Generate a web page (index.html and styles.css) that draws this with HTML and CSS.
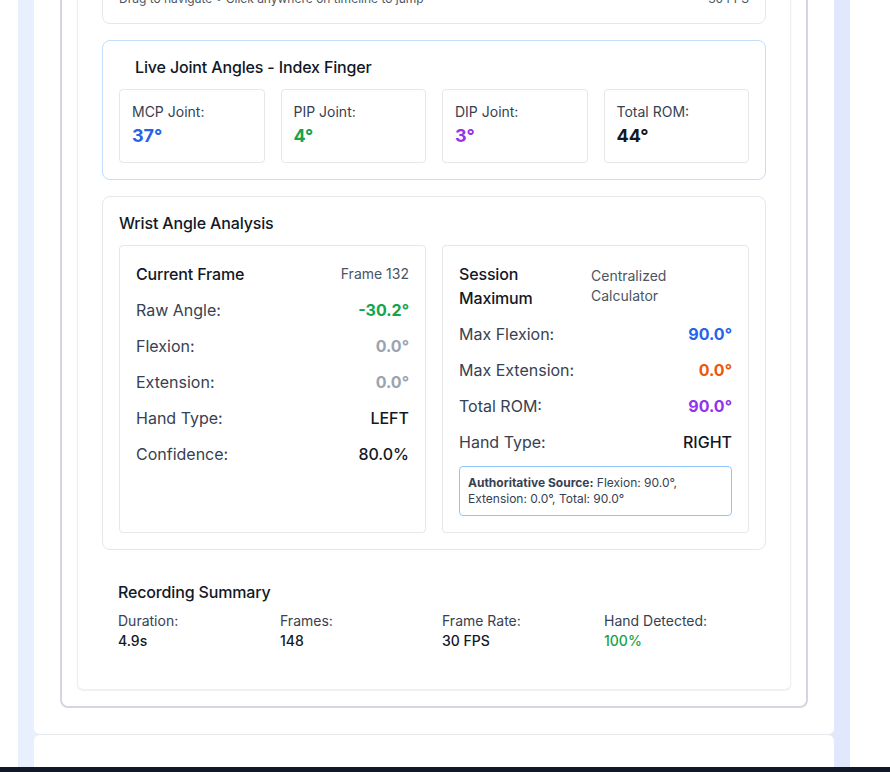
FILE: index.html
```html
<!DOCTYPE html>
<html lang="en">
<head>
<meta charset="utf-8">
<title>Motion Analysis</title>
<link rel="stylesheet" href="styles.css">
</head>
<body>
<div class="page">
  <div class="gutter"></div>
  <div class="bg">
    <div class="panel">
      <div class="outer">
        <div class="inner">
          <div class="card timeline-card">
            <div class="timeline-foot">
              <span>Drag to navigate • Click anywhere on timeline to jump</span>
              <span>30 FPS</span>
            </div>
          </div>

          <div class="card card-blue">
            <h3 class="card-title indented">Live Joint Angles - Index Finger</h3>
            <div class="joints">
              <div class="joint">
                <div class="joint-label">MCP Joint:</div>
                <div class="joint-value c-blue">37°</div>
              </div>
              <div class="joint">
                <div class="joint-label">PIP Joint:</div>
                <div class="joint-value c-green">4°</div>
              </div>
              <div class="joint">
                <div class="joint-label">DIP Joint:</div>
                <div class="joint-value c-purple">3°</div>
              </div>
              <div class="joint">
                <div class="joint-label">Total ROM:</div>
                <div class="joint-value c-dark">44°</div>
              </div>
            </div>
          </div>

          <div class="card">
            <h3 class="card-title">Wrist Angle Analysis</h3>
            <div class="wrist-grid">
              <div class="sub">
                <div class="sub-head">
                  <h4 class="sub-title">Current Frame</h4>
                  <span class="sub-note">Frame 132</span>
                </div>
                <div class="rows">
                  <div class="row"><span class="lbl">Raw Angle:</span><span class="val bold c-green">-30.2°</span></div>
                  <div class="row"><span class="lbl">Flexion:</span><span class="val bold c-muted">0.0°</span></div>
                  <div class="row"><span class="lbl">Extension:</span><span class="val bold c-muted">0.0°</span></div>
                  <div class="row"><span class="lbl">Hand Type:</span><span class="val">LEFT</span></div>
                  <div class="row"><span class="lbl">Confidence:</span><span class="val">80.0%</span></div>
                </div>
              </div>
              <div class="sub">
                <div class="sub-head">
                  <h4 class="sub-title wrap">Session Maximum</h4>
                  <span class="sub-note wrap-note">Centralized Calculator</span>
                </div>
                <div class="rows">
                  <div class="row"><span class="lbl">Max Flexion:</span><span class="val bold c-blue">90.0°</span></div>
                  <div class="row"><span class="lbl">Max Extension:</span><span class="val bold c-orange">0.0°</span></div>
                  <div class="row"><span class="lbl">Total ROM:</span><span class="val bold c-purple">90.0°</span></div>
                  <div class="row"><span class="lbl">Hand Type:</span><span class="val">RIGHT</span></div>
                </div>
                <p class="source"><strong>Authoritative Source:</strong> Flexion: 90.0°, Extension: 0.0°, Total: 90.0°</p>
              </div>
            </div>
          </div>

          <div class="summary">
            <h3 class="card-title summary-title">Recording Summary</h3>
            <div class="summary-grid">
              <div><div class="s-lbl">Duration:</div><div class="s-val">4.9s</div></div>
              <div><div class="s-lbl">Frames:</div><div class="s-val">148</div></div>
              <div><div class="s-lbl">Frame Rate:</div><div class="s-val">30 FPS</div></div>
              <div><div class="s-lbl">Hand Detected:</div><div class="s-val c-green">100%</div></div>
            </div>
          </div>
        </div>
      </div>
    </div>
    <div class="panel panel-next"></div>
  </div>
</div>
<div class="statusbar"></div>
</body>
</html>
```

FILE: styles.css
```css
* { box-sizing: border-box; }

html, body {
  margin: 0;
  padding: 0;
  background: #ffffff;
  font-family: Inter, "Noto Sans", "Liberation Sans", sans-serif;
  color: #111827;
  overflow: hidden;
}

.page {
  display: flex;
  margin-top: -93px;
  min-height: 900px;
}

.gutter { width: 18px; flex: 0 0 18px; }

.bg {
  flex: 0 0 832px;
  padding: 0 16px;
  background: linear-gradient(to right, #e9f0fd, #e1e7fc);
  display: flex;
  flex-direction: column;
}

.panel {
  background: #ffffff;
  padding: 26px 26px 26px;
  border-bottom: 1px solid #e6e8ec;
  border-radius: 0 0 6px 6px;
}

.panel-next {
  flex: 1;
  border: none;
  border-radius: 6px 6px 0 0;
  padding: 0;
}

.outer {
  border: 2px solid #d4d7dd;
  border-radius: 8px;
  padding: 15px 15px 16px;
}

.inner {
  background: #ffffff;
  border: 1px solid #eceef1;
  border-top: none;
  border-radius: 0 0 6px 6px;
  box-shadow: 0 1px 2px rgba(0, 0, 0, 0.06);
  padding: 24px;
  display: flex;
  flex-direction: column;
  gap: 16px;
}

.card {
  border: 1px solid #e5e7eb;
  border-radius: 8px;
  padding: 16px;
  background: #ffffff;
}

.timeline-foot {
  display: flex;
  justify-content: space-between;
  font-size: 12px;
  line-height: 16px;
  color: #4b5563;
}

.card-blue { border-color: #c3ddfb; }

.card-title {
  margin: 0 0 12px;
  font-size: 16px;
  line-height: 20px;
  font-weight: 500;
  color: #111827;
  letter-spacing: -0.15px;
}

.card-title.indented { padding-left: 16px; }

.joints {
  display: grid;
  grid-template-columns: repeat(4, 1fr);
  gap: 16px;
}

.joint {
  border: 1px solid #e5e7eb;
  border-radius: 4px;
  padding: 12px;
}

.joint-label {
  font-size: 14px;
  line-height: 20px;
  color: #374151;
}

.joint-value {
  font-size: 18px;
  line-height: 28px;
  font-weight: 700;
}

.wrist-grid {
  display: grid;
  grid-template-columns: 1fr 1fr;
  gap: 16px;
}

.sub {
  border: 1px solid #e5e7eb;
  border-radius: 4px;
  padding: 16px;
}

.sub-head {
  display: flex;
  justify-content: space-between;
  align-items: center;
  margin-bottom: 12px;
}

.sub-title {
  margin: 0;
  font-size: 16px;
  line-height: 24px;
  font-weight: 500;
  color: #111827;
  letter-spacing: -0.15px;
}

.sub-title.wrap { flex: 0 0 132px; }

.sub-note {
  font-size: 14px;
  line-height: 20px;
  color: #4b5563;
}

.sub-note.wrap-note { flex: 1; }

.rows {
  display: flex;
  flex-direction: column;
  gap: 12px;
}

.row {
  display: flex;
  justify-content: space-between;
  font-size: 16px;
  line-height: 24px;
}

.lbl { color: #374151; }

.val { font-weight: 500; color: #111827; }
.val.bold { font-weight: 700; }

.source {
  margin: 12px 0 0;
  border: 1px solid #93c5fd;
  border-radius: 4px;
  padding: 8px;
  font-size: 12px;
  line-height: 16px;
  color: #374151;
}

.source strong { font-weight: 700; }

.summary { padding: 16px 16px 14px; }

.summary-title { margin-bottom: 9px; }

.summary-grid {
  display: grid;
  grid-template-columns: repeat(4, 1fr);
  gap: 16px;
}

.s-lbl {
  font-size: 14px;
  line-height: 20px;
  color: #374151;
}

.s-val {
  font-size: 14px;
  line-height: 20px;
  font-weight: 500;
  color: #111827;
}

/* colour utilities (declared last so they win over base text colours) */
.c-blue { color: #2563eb; }
.c-green { color: #16a34a; }
.c-purple { color: #9333ea; }
.c-orange { color: #ea580c; }
.c-dark { color: #111827; }
.c-muted { color: #9ca3af; }

.statusbar {
  position: fixed;
  left: 0;
  right: 0;
  bottom: 0;
  height: 5px;
  background: #111827;
}
```
